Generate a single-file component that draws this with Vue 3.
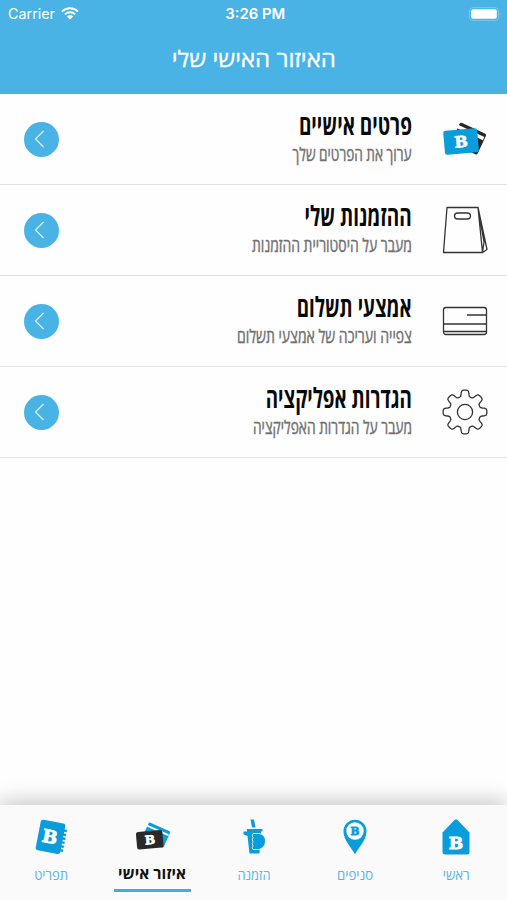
<script setup>
import { ref } from 'vue'

const active = ref('personal')

const rows = [
  { id: 'details', title: 'פרטים אישיים', titleW: 113, sub: 'ערוך את הפרטים שלך', subW: 119 },
  { id: 'orders', title: 'ההזמנות שלי', titleW: 107, sub: 'מעבר על היסטוריית ההזמנות', subW: 160 },
  { id: 'payment', title: 'אמצעי תשלום', titleW: 115, sub: 'צפייה ועריכה של אמצעי תשלום', subW: 175 },
  { id: 'settings', title: 'הגדרות אפליקציה', titleW: 146, sub: 'מעבר על הגדרות האפליקציה', subW: 159 },
]

const tabs = [
  { id: 'home', label: 'ראשי', w: 27 },
  { id: 'branches', label: 'סניפים', w: 36 },
  { id: 'order', label: 'הזמנה', w: 33 },
  { id: 'personal', label: 'איזור אישי', w: 68 },
  { id: 'menu', label: 'תפריט', w: 34 },
]

// Condenses a label horizontally to the given width in pixels.
const vFit = {
  mounted(el, { value }) {
    el.style.transform = `scaleX(${value / el.getBoundingClientRect().width})`
  },
}

// Eight-toothed gear outline around (23, 23).
const gear = 'M' + Array.from({ length: 192 }, (_, i) => {
  const a = (i / 192) * Math.PI * 2
  const r = 18.8 + 3.1 * Math.tanh(2.4 * (Math.cos(8 * a) + 0.1))
  return `${(23 + r * Math.cos(a)).toFixed(2)} ${(23 + r * Math.sin(a)).toFixed(2)}`
}).join('L') + 'Z'
</script>

<template>
  <div class="screen" dir="rtl">
    <header class="header">
      <div class="status" dir="ltr">
        <div class="carrier">
          <span v-fit="47" class="from-left">Carrier</span>
          <svg class="wifi" width="18" height="13" viewBox="0 0 18 13">
            <path d="M1 4.6a11.5 11.5 0 0 1 16 0M3.9 7.4a7.4 7.4 0 0 1 10.2 0" fill="none" stroke="#fff" stroke-width="2" />
            <path d="M9 12.6 5.9 9.4a4.5 4.5 0 0 1 6.2 0Z" fill="#fff" />
          </svg>
        </div>
        <span v-fit="60" class="clock">3:26 PM</span>
        <div class="battery">
          <svg width="33" height="14" viewBox="0 0 33 14">
            <rect x=".6" y=".6" width="28.8" height="12.8" rx="3.5" fill="none" stroke="#7cc8ed" />
            <rect x="2.2" y="2.2" width="25.6" height="9.6" rx="2" fill="#fff" />
            <path d="M31 5q1.8 2 0 4Z" fill="#7cc8ed" />
          </svg>
        </div>
      </div>
      <h1><span v-fit="164">האיזור האישי שלי</span></h1>
    </header>

    <main class="list">
      <div v-for="row in rows" :key="row.id" class="row">
        <div class="icon">
          <svg v-if="row.id === 'details'" width="46" height="46" viewBox="0 0 46 46">
            <g transform="rotate(25 28 21)">
              <rect x="13" y="11.5" width="29" height="23" rx="2" fill="#292929" />
              <path d="M12 16.7h29" stroke="#fff" stroke-width="3.4" />
            </g>
            <g transform="rotate(-5 19 25)">
              <rect x="2" y="13.5" width="34" height="24" rx="2.5" fill="#0b9ddb" />
              <text x="19" y="31.2" class="logo on-fill" font-size="15.5">B</text>
            </g>
          </svg>
          <svg v-else-if="row.id === 'orders'" width="46" height="50" viewBox="0 0 46 50" class="line">
            <path d="M5 2.5H36L40.5 47.5H1.5ZM36 2.5 45 44.5 40.5 47.5M36.5 6 42 37 40.5 47" />
            <rect x="12.5" y="8" width="16" height="6" rx="3" />
          </svg>
          <svg v-else-if="row.id === 'payment'" width="46" height="46" viewBox="0 0 46 46" class="line">
            <rect x="1.5" y="9.5" width="43" height="27" rx="2.5" />
            <path d="M25 17h19.5M1.5 26h43M1.5 33.5h43" />
          </svg>
          <svg v-else width="46" height="46" viewBox="0 0 46 46" class="line">
            <path :d="gear" />
            <circle cx="23" cy="23" r="7.6" />
          </svg>
        </div>
        <div class="copy">
          <h2><span v-fit="row.titleW" class="from-right">{{ row.title }}</span></h2>
          <p><span v-fit="row.subW" class="from-right">{{ row.sub }}</span></p>
        </div>
        <button class="go">
          <svg width="34" height="34" viewBox="0 0 34 34">
            <path d="M18.5 9 10.5 17l8 8" fill="none" stroke="#d9effa" stroke-width="1.2" />
          </svg>
        </button>
      </div>
    </main>

    <nav class="tabs">
      <a v-for="tab in tabs" :key="tab.id" class="tab" :class="{ active: tab.id === active }" @click="active = tab.id">
        <svg v-if="tab.id === 'home'" width="36" height="38" viewBox="0 0 36 38">
          <path d="M16.5 2q1.5-1.5 3 0L31.5 14.5V34q0 2.5-2.5 2.5h-22Q4.5 36.5 4.5 34V14.5Z" fill="#0b9ddb" />
          <text x="18" y="30.7" class="logo on-fill" font-size="17">B</text>
        </svg>
        <svg v-else-if="tab.id === 'branches'" width="36" height="38" viewBox="0 0 36 38">
          <path d="M18 36.5C15 30 6.5 22.5 6.5 13.2a11.5 11.5 0 0 1 23 0C29.5 22.5 21 30 18 36.5Z" fill="#0b9ddb" />
          <circle cx="18" cy="13" r="8.7" fill="#fff" />
          <text x="18" y="16.8" class="logo on-white" font-size="10.5">B</text>
        </svg>
        <svg v-else-if="tab.id === 'order'" width="36" height="38" viewBox="0 0 36 38">
          <g fill="#0b9ddb">
            <path d="M14.5 1.500h3.5L19.500 9.500H16ZM11 11h15.500v2.500h-1.500L23.500 35.500H13.500L11.500 18 7.500 16.500V13.500H11Z" />
            <path d="M17 15.500h6q6.500 1 6.500 7.500t-6.500 8.500h-6q-1.500-2 0-3.700-1.500-2 0-4-1.500-2 0-4-1.500-2 0-4.300Z" stroke="#fafafa" stroke-width=".8" />
          </g>
        </svg>
        <svg v-else-if="tab.id === 'personal'" width="36" height="38" viewBox="0 0 36 38">
          <g transform="rotate(24 23 17)">
            <rect x="10.500" y="8.500" width="23.500" height="18" rx="1.500" fill="#0b9ddb" />
            <path d="M10 12.500h23.500" stroke="#fafafa" stroke-width="2" />
          </g>
          <g transform="rotate(-5 16 22)">
            <rect x="2.500" y="13" width="26.500" height="17.500" rx="2.200" fill="#292929" />
            <text x="16" y="26.200" class="logo on-fill" font-size="12">B</text>
          </g>
        </svg>
        <svg v-else width="36" height="38" viewBox="0 0 36 38">
          <g transform="rotate(11 18 19)">
            <rect x="5" y="3.500" width="25" height="31" rx="2.500" fill="#0b9ddb" />
            <path d="M30.500 9v24" stroke="#0b9ddb" stroke-width="4" stroke-dasharray="2.400 1.600" />
            <text x="17" y="25.200" class="logo on-fill" font-size="18">B</text>
          </g>
        </svg>
        <span v-fit="tab.w" class="label">{{ tab.label }}</span>
        <i v-if="tab.id === active" class="bar"></i>
      </a>
    </nav>
  </div>
</template>

<style>
body {
  margin: 0;
  background: #fff;
}
</style>

<style scoped>
.screen {
  display: flex;
  flex-direction: column;
  width: 507px;
  height: 900px;
  overflow: hidden;
  background: #fefefe;
  font-family: "Open Sans", "Liberation Sans", sans-serif;
}
span {
  display: inline-block;
  white-space: nowrap;
}
.from-left { transform-origin: left center; }
.from-right { transform-origin: right center; }
.header {
  height: 94px;
  flex: none;
  background: #49b3e5;
  color: #fff;
}
.status {
  display: grid;
  grid-template-columns: 1fr auto 1fr;
  align-items: center;
  height: 27px;
  padding: 0 5px 0 8px;
  font-family: Inter, sans-serif;
  font-size: 14.5px;
  line-height: 27px;
}
.carrier {
  display: flex;
  align-items: center;
  gap: 5px;
}
.clock {
  font-weight: 600;
}
.battery {
  display: flex;
  justify-content: flex-end;
}
h1 {
  margin: 0;
  padding-top: 15px;
  text-align: center;
  font-size: 22.5px;
  line-height: 34px;
  font-weight: 400;
  -webkit-text-stroke: 0.3px #fff;
}
.list {
  flex: 1;
}
.row {
  box-sizing: border-box;
  display: flex;
  align-items: center;
  height: 91px;
  padding: 0 19px 0 24px;
  border-bottom: 1px solid #e4e4e4;
}
.icon {
  display: flex;
  width: 46px;
}
.line {
  fill: none;
  stroke: #333;
  stroke-width: 1.3;
  stroke-linejoin: round;
}
.logo {
  font-family: "DejaVu Serif", serif;
  font-weight: 700;
  text-anchor: middle;
  direction: ltr;
  stroke-width: 0.8;
}
.on-fill {
  fill: #fff;
  stroke: #fff;
}
.on-white {
  fill: #0b9ddb;
  stroke: #0b9ddb;
}
.copy {
  flex: 1;
  padding: 0 30px 4px 0;
}
h2 {
  margin: 0;
  font-size: 27.5px;
  line-height: 32px;
  font-weight: 700;
  color: #080808;
}
p {
  margin: 0;
  font-size: 18.5px;
  line-height: 25px;
  font-weight: 400;
  color: #707070;
  -webkit-text-stroke: 0.4px #707070;
}
.go {
  width: 35px;
  height: 35px;
  padding: 0;
  border: 0;
  border-radius: 50%;
  background: #49b3e5;
}
.go svg {
  display: block;
}
.tabs {
  display: grid;
  grid-template-columns: repeat(5, 1fr);
  height: 95px;
  background: #fafafa;
  box-shadow: 0 -4px 20px rgba(0, 0, 0, 0.22);
}
.tab {
  display: flex;
  flex-direction: column;
  align-items: center;
  padding-top: 13px;
  color: #58b5e2;
  font-size: 14px;
}
.label {
  margin-top: 9px;
  line-height: 20px;
}
.active .label {
  margin-top: 7px;
  color: #111;
  font-size: 16px;
  font-weight: 700;
}
.bar {
  width: 77px;
  height: 3px;
  margin-top: 6px;
  background: #43acdc;
}
</style>
